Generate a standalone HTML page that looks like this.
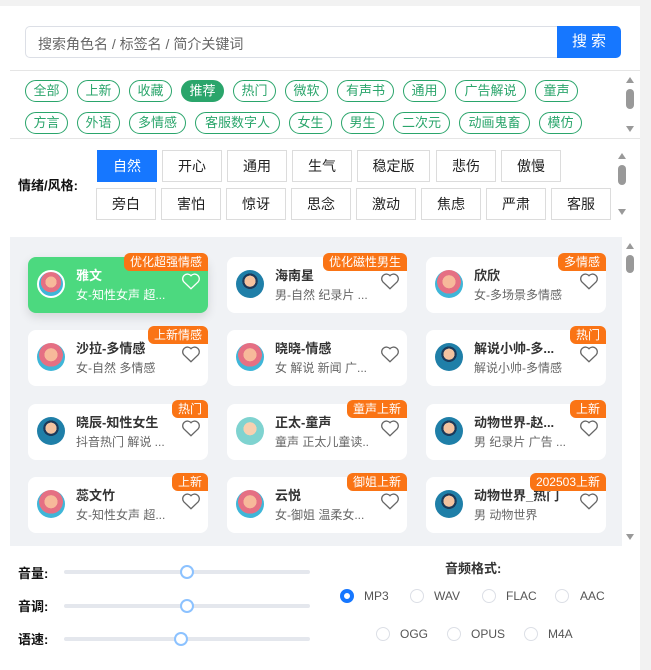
<!DOCTYPE html><html><head><meta charset="utf-8"><style>
*{box-sizing:border-box;margin:0;padding:0}
body{width:651px;height:670px;background:#f2f2f2;font-family:"Liberation Sans","Noto Sans CJK SC",sans-serif;position:relative;overflow:hidden}
.panel{position:absolute;left:0;top:6px;width:640px;height:664px;background:#fff}
.abs{position:absolute}
.search{left:25px;top:26px;width:533px;height:32px;border:1px solid #dcdfe6;border-right:none;border-radius:5px 0 0 5px;font-size:14px;color:#666;padding:7px 12px}
.sbtn{left:557px;top:26px;width:64px;height:32px;background:#1677ff;color:#fff;border-radius:0 5px 5px 0;font-size:15px;text-align:center;line-height:32px;letter-spacing:4px;padding-left:4px}
.hr{left:10px;width:630px;height:1px;background:#e5e5e5}
.tag{position:absolute;height:22px;border:1px solid #2aa56b;border-radius:11px;color:#2aa56b;font-size:13px;line-height:20px;text-align:center}
.tag.on{background:#2aa56b;color:#fff}
.eb{position:absolute;height:32px;border:1px solid #dcdcdc;font-size:14px;line-height:30px;text-align:center;color:#222}
.eb.on{background:#1677ff;color:#fff;border-color:#1677ff}
.sb{position:absolute;width:8px;background:#999;border-radius:4px}
.tri{position:absolute;width:0;height:0;border-left:4px solid transparent;border-right:4px solid transparent}
.up{border-bottom:6px solid #999}.dn{border-top:6px solid #999}
.card{position:absolute;width:180px;height:56px;background:#fff;border-radius:8px}
.card.on{background:#4cd97f;box-shadow:0 4px 10px rgba(0,0,0,.12)}
.av{position:absolute;left:9px;top:13px;width:28px;height:28px;border-radius:50%}
.f{background:radial-gradient(circle at 50% 42%,#f7b99a 0 30%,#e56f83 31% 55%,#3fb6d8 56%)}
.m{background:radial-gradient(circle at 50% 40%,#f3c3a0 0 25%,#1b3a5a 26% 35%,#1f7fa8 36%)}
.on .av{border:2px solid #fff}
.nm{position:absolute;left:48px;top:8px;font-size:13px;font-weight:bold;color:#333;white-space:nowrap;width:110px;overflow:hidden}
.ds{position:absolute;left:48px;top:29px;font-size:12px;color:#666;white-space:nowrap;width:95px;overflow:hidden}
.on .nm,.on .ds{color:#fff}
.bd{position:absolute;right:0;top:-4px;height:18px;background:#fa7415;color:#fff;font-size:12px;line-height:18px;padding:0 6px;border-radius:6px 6px 0 6px;white-space:nowrap}
.ht{position:absolute;right:7px;top:15px}
.lab{position:absolute;left:18px;font-size:13px;font-weight:bold;color:#111}
.tr{position:absolute;left:64px;width:246px;height:4px;background:#e4e7ed;border-radius:2px}
.th{position:absolute;width:14px;height:14px;border:2px solid #8cc2ff;border-radius:50%;background:#fff}
.rd{position:absolute;width:14px;height:14px;border:1px solid #dcdfe6;border-radius:50%}
.rd.on{border:4px solid #1677ff}
.rt{position:absolute;font-size:12px;color:#555}
</style></head><body>
<div class="panel"></div>
<div class="abs search">搜索角色名 / 标签名 / 简介关键词</div>
<div class="abs sbtn">搜索</div>
<div class="abs hr" style="top:70px"></div>
<div class="abs hr" style="top:138px"></div>
<div class="tag" style="left:25px;top:80px;width:43px">全部</div>
<div class="tag" style="left:77px;top:80px;width:43px">上新</div>
<div class="tag" style="left:129px;top:80px;width:43px">收藏</div>
<div class="tag on" style="left:181px;top:80px;width:43px">推荐</div>
<div class="tag" style="left:233px;top:80px;width:43px">热门</div>
<div class="tag" style="left:285px;top:80px;width:43px">微软</div>
<div class="tag" style="left:337px;top:80px;width:57px">有声书</div>
<div class="tag" style="left:403px;top:80px;width:43px">通用</div>
<div class="tag" style="left:455px;top:80px;width:71px">广告解说</div>
<div class="tag" style="left:535px;top:80px;width:43px">童声</div>
<div class="tag" style="left:25px;top:112px;width:43px">方言</div>
<div class="tag" style="left:77px;top:112px;width:43px">外语</div>
<div class="tag" style="left:129px;top:112px;width:57px">多情感</div>
<div class="tag" style="left:195px;top:112px;width:85px">客服数字人</div>
<div class="tag" style="left:289px;top:112px;width:43px">女生</div>
<div class="tag" style="left:341px;top:112px;width:43px">男生</div>
<div class="tag" style="left:393px;top:112px;width:57px">二次元</div>
<div class="tag" style="left:459px;top:112px;width:71px">动画鬼畜</div>
<div class="tag" style="left:539px;top:112px;width:43px">模仿</div>
<div class="tri up" style="left:626px;top:77px"></div><div class="sb" style="left:626px;top:89px;height:20px"></div><div class="tri dn" style="left:626px;top:126px"></div>
<div class="lab" style="top:175px">情绪/风格:</div>
<div class="eb on" style="left:97px;top:150px;width:60px">自然</div>
<div class="eb" style="left:162px;top:150px;width:60px">开心</div>
<div class="eb" style="left:227px;top:150px;width:60px">通用</div>
<div class="eb" style="left:292px;top:150px;width:60px">生气</div>
<div class="eb" style="left:357px;top:150px;width:73px">稳定版</div>
<div class="eb" style="left:436px;top:150px;width:60px">悲伤</div>
<div class="eb" style="left:501px;top:150px;width:60px">傲慢</div>
<div class="eb" style="left:96px;top:188px;width:60px">旁白</div>
<div class="eb" style="left:161px;top:188px;width:60px">害怕</div>
<div class="eb" style="left:226px;top:188px;width:60px">惊讶</div>
<div class="eb" style="left:291px;top:188px;width:60px">思念</div>
<div class="eb" style="left:356px;top:188px;width:60px">激动</div>
<div class="eb" style="left:421px;top:188px;width:60px">焦虑</div>
<div class="eb" style="left:486px;top:188px;width:60px">严肃</div>
<div class="eb" style="left:551px;top:188px;width:60px">客服</div>
<div class="tri up" style="left:618px;top:153px"></div><div class="sb" style="left:618px;top:165px;height:20px"></div><div class="tri dn" style="left:618px;top:209px"></div>
<div class="abs" style="left:10px;top:237px;width:612px;height:309px;background:#f0f2f5"></div>
<div class="tri up" style="left:626px;top:243px"></div><div class="sb" style="left:626px;top:255px;height:18px"></div><div class="tri dn" style="left:626px;top:534px"></div>

<div class="card on" style="left:28px;top:257px"><div class="av f"></div><div class="nm">雅文</div><div class="ds">女-知性女声 超...</div><div class="bd">优化超强情感</div><svg class="ht" width="20" height="18" viewBox="0 0 24 22"><path d="M12 20.5 3.2 12A5.2 5.2 0 0 1 12 4.6 5.2 5.2 0 0 1 20.8 12Z" fill="none" stroke="#fff" stroke-width="1.6"/></svg></div>
<div class="card" style="left:227px;top:257px"><div class="av m"></div><div class="nm">海南星</div><div class="ds">男-自然 纪录片 ...</div><div class="bd">优化磁性男生</div><svg class="ht" width="20" height="18" viewBox="0 0 24 22"><path d="M12 20.5 3.2 12A5.2 5.2 0 0 1 12 4.6 5.2 5.2 0 0 1 20.8 12Z" fill="none" stroke="#666" stroke-width="1.6"/></svg></div>
<div class="card" style="left:426px;top:257px"><div class="av f"></div><div class="nm">欣欣</div><div class="ds">女-多场景多情感</div><div class="bd">多情感</div><svg class="ht" width="20" height="18" viewBox="0 0 24 22"><path d="M12 20.5 3.2 12A5.2 5.2 0 0 1 12 4.6 5.2 5.2 0 0 1 20.8 12Z" fill="none" stroke="#666" stroke-width="1.6"/></svg></div>

<div class="card" style="left:28px;top:330px"><div class="av f"></div><div class="nm">沙拉-多情感</div><div class="ds">女-自然 多情感</div><div class="bd">上新情感</div><svg class="ht" width="20" height="18" viewBox="0 0 24 22"><path d="M12 20.5 3.2 12A5.2 5.2 0 0 1 12 4.6 5.2 5.2 0 0 1 20.8 12Z" fill="none" stroke="#666" stroke-width="1.6"/></svg></div>
<div class="card" style="left:227px;top:330px"><div class="av f"></div><div class="nm">晓晓-情感</div><div class="ds">女 解说 新闻 广...</div><svg class="ht" width="20" height="18" viewBox="0 0 24 22"><path d="M12 20.5 3.2 12A5.2 5.2 0 0 1 12 4.6 5.2 5.2 0 0 1 20.8 12Z" fill="none" stroke="#666" stroke-width="1.6"/></svg></div>
<div class="card" style="left:426px;top:330px"><div class="av m"></div><div class="nm" style="width:92px">解说小帅-多...</div><div class="ds">解说小帅-多情感</div><div class="bd">热门</div><svg class="ht" width="20" height="18" viewBox="0 0 24 22"><path d="M12 20.5 3.2 12A5.2 5.2 0 0 1 12 4.6 5.2 5.2 0 0 1 20.8 12Z" fill="none" stroke="#666" stroke-width="1.6"/></svg></div>

<div class="card" style="left:28px;top:404px"><div class="av m"></div><div class="nm">晓辰-知性女生</div><div class="ds">抖音热门 解说 ...</div><div class="bd">热门</div><svg class="ht" width="20" height="18" viewBox="0 0 24 22"><path d="M12 20.5 3.2 12A5.2 5.2 0 0 1 12 4.6 5.2 5.2 0 0 1 20.8 12Z" fill="none" stroke="#666" stroke-width="1.6"/></svg></div>
<div class="card" style="left:227px;top:404px"><div class="av" style="background:radial-gradient(circle at 50% 42%,#f7d0b0 0 30%,#7fd3d0 31%)"></div><div class="nm">正太-童声</div><div class="ds">童声 正太儿童读...</div><div class="bd">童声上新</div><svg class="ht" width="20" height="18" viewBox="0 0 24 22"><path d="M12 20.5 3.2 12A5.2 5.2 0 0 1 12 4.6 5.2 5.2 0 0 1 20.8 12Z" fill="none" stroke="#666" stroke-width="1.6"/></svg></div>
<div class="card" style="left:426px;top:404px"><div class="av m"></div><div class="nm" style="width:92px">动物世界-赵...</div><div class="ds">男 纪录片 广告 ...</div><div class="bd">上新</div><svg class="ht" width="20" height="18" viewBox="0 0 24 22"><path d="M12 20.5 3.2 12A5.2 5.2 0 0 1 12 4.6 5.2 5.2 0 0 1 20.8 12Z" fill="none" stroke="#666" stroke-width="1.6"/></svg></div>

<div class="card" style="left:28px;top:477px"><div class="av f"></div><div class="nm">蕊文竹</div><div class="ds">女-知性女声 超...</div><div class="bd">上新</div><svg class="ht" width="20" height="18" viewBox="0 0 24 22"><path d="M12 20.5 3.2 12A5.2 5.2 0 0 1 12 4.6 5.2 5.2 0 0 1 20.8 12Z" fill="none" stroke="#666" stroke-width="1.6"/></svg></div>
<div class="card" style="left:227px;top:477px"><div class="av f"></div><div class="nm">云悦</div><div class="ds">女-御姐 温柔女...</div><div class="bd">御姐上新</div><svg class="ht" width="20" height="18" viewBox="0 0 24 22"><path d="M12 20.5 3.2 12A5.2 5.2 0 0 1 12 4.6 5.2 5.2 0 0 1 20.8 12Z" fill="none" stroke="#666" stroke-width="1.6"/></svg></div>
<div class="card" style="left:426px;top:477px"><div class="av m"></div><div class="nm" style="width:92px">动物世界_热门</div><div class="ds">男 动物世界</div><div class="bd">202503上新</div><svg class="ht" width="20" height="18" viewBox="0 0 24 22"><path d="M12 20.5 3.2 12A5.2 5.2 0 0 1 12 4.6 5.2 5.2 0 0 1 20.8 12Z" fill="none" stroke="#666" stroke-width="1.6"/></svg></div>

<div class="lab" style="top:563px">音量:</div><div class="tr" style="top:570px"></div><div class="th" style="left:180px;top:565px"></div>
<div class="lab" style="top:596px">音调:</div><div class="tr" style="top:604px"></div><div class="th" style="left:180px;top:599px"></div>
<div class="lab" style="top:629px">语速:</div><div class="tr" style="top:637px"></div><div class="th" style="left:174px;top:632px"></div>
<div class="abs" style="left:445px;top:558px;font-size:13px;font-weight:bold;color:#333">音频格式:</div>
<div class="rd on" style="left:340px;top:589px"></div><div class="rt" style="left:364px;top:589px">MP3</div>
<div class="rd" style="left:410px;top:589px"></div><div class="rt" style="left:434px;top:589px">WAV</div>
<div class="rd" style="left:482px;top:589px"></div><div class="rt" style="left:506px;top:589px">FLAC</div>
<div class="rd" style="left:555px;top:589px"></div><div class="rt" style="left:580px;top:589px">AAC</div>
<div class="rd" style="left:376px;top:627px"></div><div class="rt" style="left:400px;top:627px">OGG</div>
<div class="rd" style="left:447px;top:627px"></div><div class="rt" style="left:471px;top:627px">OPUS</div>
<div class="rd" style="left:524px;top:627px"></div><div class="rt" style="left:548px;top:627px">M4A</div>
</body></html>
